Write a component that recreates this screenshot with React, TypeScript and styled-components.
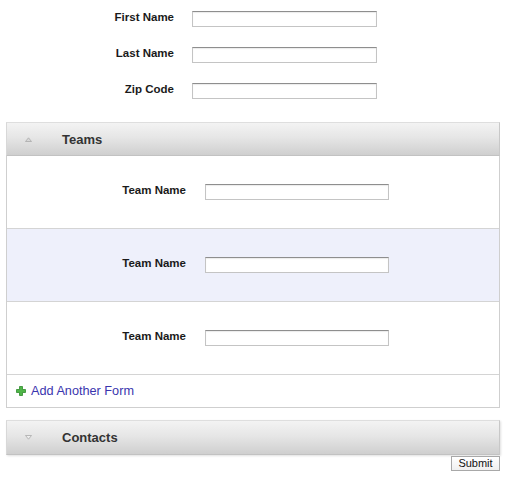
import React from "react";
import styled, { createGlobalStyle } from "styled-components";

const Global = createGlobalStyle`
  html, body { margin: 0; padding: 0; background: #fff; }
  body { font-family: "Liberation Sans", Arial, sans-serif; color: #222; }
`;

const Page = styled.div`
  width: 516px;
  padding-top: 1px;
`;

const TopForm = styled.div`
  display: flex;
  flex-direction: column;
`;

const FieldRow = styled.div<{ $labelWidth: number; $gap: number; $height: number }>`
  display: flex;
  align-items: center;
  height: ${(p) => p.$height}px;
  gap: ${(p) => p.$gap}px;
  & > label {
    width: ${(p) => p.$labelWidth}px;
  }
`;

const Label = styled.label`
  display: block;
  text-align: right;
  font-size: 11.5px;
  font-weight: bold;
  color: #1a1a1a;
  line-height: 14px;
  padding-bottom: 4px;
`;

const TextInput = styled.input<{ $w: number }>`
  box-sizing: border-box;
  width: ${(p) => p.$w}px;
  height: 16px;
  margin: 0;
  padding: 0 2px;
  border: 1px solid #c4c4c4;
  border-top-color: #8e8e8e;
  box-shadow: inset 0 1px 1px rgba(0, 0, 0, 0.08);
  background: #fff;
  font-size: 11px;
  outline: none;
`;

const Panel = styled.div`
  margin: 13px 0 0 6px;
  width: 494px;
  box-sizing: border-box;
  border: 1px solid #cfcfcf;
  border-top: none;
`;

const PanelHeader = styled.div<{ $standalone?: boolean }>`
  box-sizing: border-box;
  height: ${(p) => (p.$standalone ? 35 : 34)}px;
  ${(p) => (p.$standalone ? "margin: 12px 0 0 6px; width: 494px;" : "margin: 0 -1px; ")}
  display: flex;
  align-items: center;
  background: linear-gradient(#f3f3f3, #e6e6e6 45%, #cfcfcf);
  border-top: 1px solid #dedede;
  border-bottom: 1px solid #c2c2c2;
  border-right: 1px solid #c8c8c8;
  border-left: 1px solid #d8d8d8;
  box-shadow: ${(p) => (p.$standalone ? "1px 1px 2px rgba(0,0,0,0.12)" : "none")};
`;

const Toggle = styled.span`
  width: 55px;
  display: flex;
  justify-content: center;
  padding-right: 12px;
  box-sizing: border-box;
`;

const HeaderTitle = styled.span`
  font-size: 13px;
  font-weight: bold;
  color: #333;
`;

const FormRow = styled.div<{ $alt?: boolean }>`
  height: 72px;
  border-bottom: 1px solid #d4d4d4;
  background: ${(p) => (p.$alt ? "#eef0fb" : "#fff")};
  display: flex;
  align-items: center;
`;

const AddRow = styled.div`
  height: 32px;
  display: flex;
  align-items: center;
  gap: 5px;
  padding-left: 9px;
`;

const AddLink = styled.a`
  font-size: 12.7px;
  color: #3a35ae;
  text-decoration: none;
`;

const ButtonBar = styled.div`
  width: 494px;
  margin-left: 6px;
  display: flex;
  justify-content: flex-end;
  padding-top: 1px;
`;

const SubmitButton = styled.button`
  box-sizing: border-box;
  height: 15px;
  width: 49px;
  padding: 0;
  font-family: "Liberation Sans", Arial, sans-serif;
  font-size: 11px;
  line-height: 13px;
  color: #111;
  background: linear-gradient(#ffffff, #f0f0f0);
  border: 1px solid #a8a8a8;
  border-radius: 0;
`;

const TriUp = () => (
  <svg width="7" height="5" viewBox="0 0 7 5">
    <path d="M0.5 4.5 L3.5 0.8 L6.5 4.5 Z" fill="#d8d8d8" stroke="#a9a9a9" strokeWidth="0.8" />
  </svg>
);

const TriDown = () => (
  <svg width="7" height="5" viewBox="0 0 7 5">
    <path d="M0.5 0.5 L3.5 4.2 L6.5 0.5 Z" fill="#eeeeee" stroke="#a9a9a9" strokeWidth="0.8" />
  </svg>
);

const PlusIcon = () => (
  <svg width="10" height="10" viewBox="0 0 10 10">
    <path
      d="M3.5 0.5 H6.5 V3.5 H9.5 V6.5 H6.5 V9.5 H3.5 V6.5 H0.5 V3.5 H3.5 Z"
      fill="#4fb548"
      stroke="#2f8a2c"
      strokeWidth="0.8"
      strokeLinejoin="round"
    />
  </svg>
);

const topFields = ["First Name", "Last Name", "Zip Code"];

export default function App() {
  return (
    <Page>
      <Global />
      <TopForm>
        {topFields.map((f) => (
          <FieldRow key={f} $labelWidth={174} $gap={18} $height={36}>
            <Label>{f}</Label>
            <TextInput $w={185} />
          </FieldRow>
        ))}
      </TopForm>
      <Panel>
        <PanelHeader>
          <Toggle>
            <TriUp />
          </Toggle>
          <HeaderTitle>Teams</HeaderTitle>
        </PanelHeader>
        {[false, true, false].map((alt, i) => (
          <FormRow key={i} $alt={alt}>
            <FieldRow $labelWidth={179} $gap={19} $height={72}>
              <Label>Team Name</Label>
              <TextInput $w={184} />
            </FieldRow>
          </FormRow>
        ))}
        <AddRow>
          <PlusIcon />
          <AddLink href="#">Add Another Form</AddLink>
        </AddRow>
      </Panel>
      <PanelHeader $standalone>
        <Toggle>
          <TriDown />
        </Toggle>
        <HeaderTitle>Contacts</HeaderTitle>
      </PanelHeader>
      <ButtonBar>
        <SubmitButton>Submit</SubmitButton>
      </ButtonBar>
    </Page>
  );
}
